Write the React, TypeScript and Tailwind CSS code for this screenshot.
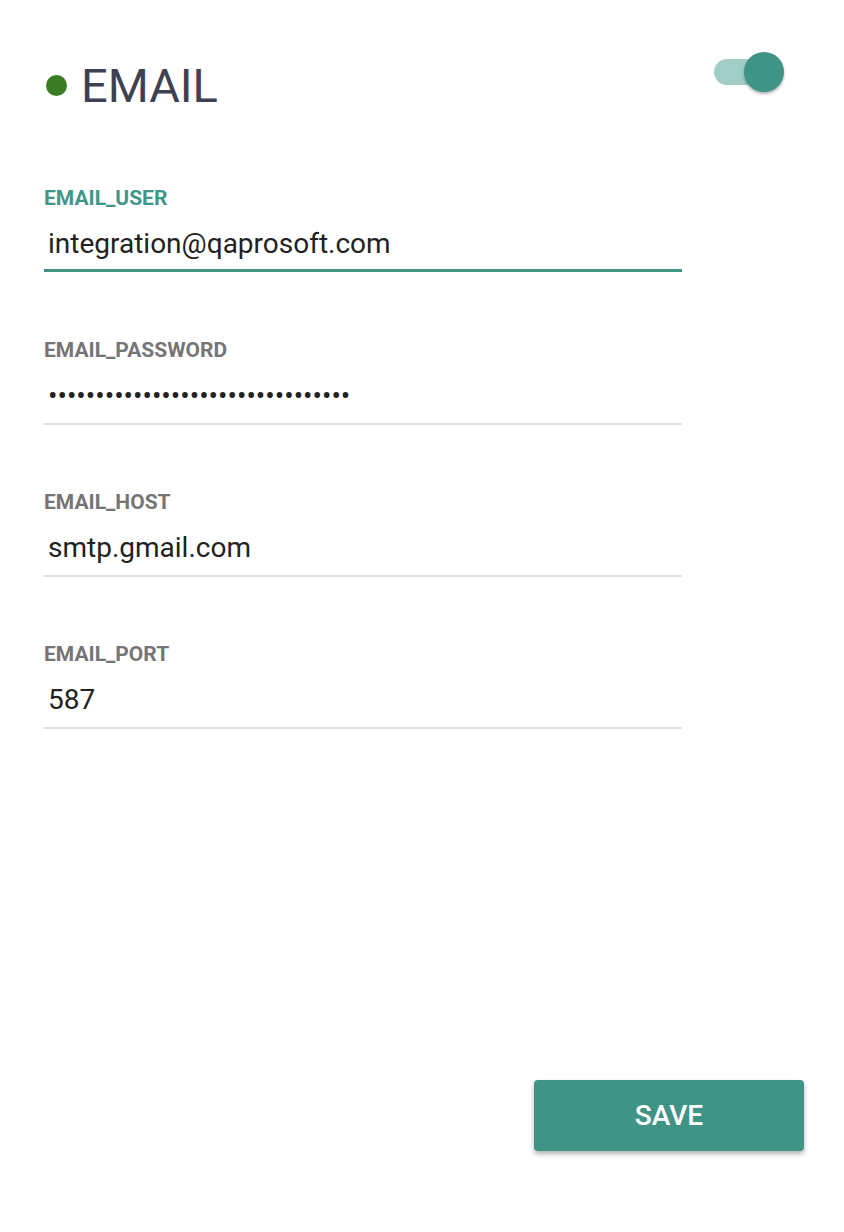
import { useState } from "react"

const fields = [
  { label: "EMAIL_USER", value: "integration@qaprosoft.com", active: true },
  { label: "EMAIL_PASSWORD", value: "•".repeat(32), active: false },
  { label: "EMAIL_HOST", value: "smtp.gmail.com", active: false },
  { label: "EMAIL_PORT", value: "587", active: false },
]

function Toggle({ on, onClick }: { on: boolean; onClick: () => void }) {
  return (
    <button onClick={onClick} className="relative w-[70px] h-[40px] flex items-center">
      <span className={`block w-[56px] h-[26px] rounded-full ${on ? "bg-[#a1cdc7]" : "bg-gray-300"}`} />
      <span
        className={`absolute top-0 w-[40px] h-[40px] rounded-full shadow-[0_2px_3px_rgba(0,0,0,0.3)] ${
          on ? "left-[30px] bg-[#409486]" : "left-0 bg-white"
        }`}
      />
    </button>
  )
}

export default function App() {
  const [on, setOn] = useState(true)

  return (
    <div className="w-[844px] h-[1232px] bg-white flex flex-col font-['Roboto',sans-serif]">
      <div className="flex justify-between items-start pl-[46px] pr-[60px] pt-[52px]">
        <div className="flex items-center gap-[14px] mt-[10px]">
          <span className="w-[21px] h-[21px] rounded-full bg-[#3a7d24]" />
          <h1 className="text-[47px] leading-none text-[#3d4150]">EMAIL</h1>
        </div>
        <Toggle on={on} onClick={() => setOn(!on)} />
      </div>

      <div className="flex flex-col gap-[68px] mt-[79px] pl-[44px] w-[682px]">
        {fields.map((f) => (
          <div key={f.label} className="flex flex-col">
            <label
              className={`text-[21px] font-bold leading-none ${f.active ? "text-[#41968a]" : "text-[#757575]"}`}
            >
              {f.label}
            </label>
            <div
              className={`pl-[4px] pt-[20px] text-[28px] leading-[30px] text-[#222] ${
                f.active ? "pb-[10px]" : "pb-[12px]"
              }`}
            >
              {f.value}
            </div>
            <div className={f.active ? "h-[3px] bg-[#409486]" : "h-[2px] bg-[#e0e0e0] -mb-[1px]"} />
          </div>
        ))}
      </div>

      <div className="flex-1" />
      <div className="flex justify-end pr-[40px] pb-[81px]">
        <button className="w-[270px] h-[71px] rounded-[4px] bg-[#409486] text-white text-[28px] font-medium shadow-[0_3px_5px_rgba(0,0,0,0.3)]">
          SAVE
        </button>
      </div>
    </div>
  )
}
